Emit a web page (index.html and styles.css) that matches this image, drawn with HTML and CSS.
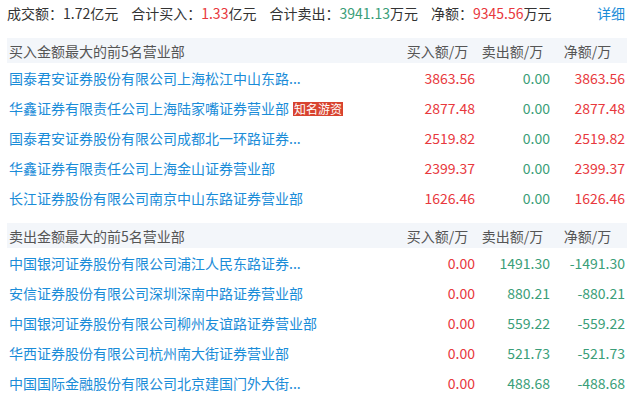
FILE: index.html
```html
<!DOCTYPE html>
<html>
<head>
<meta charset="utf-8">
<link rel="stylesheet" href="styles.css">
</head>
<body>
<div class="page">
  <div class="summary">
    <span class="item">成交额：1.72亿元</span>
    <span class="item">合计买入：<span class="red">1.33</span>亿元</span>
    <span class="item">合计卖出：<span class="green">3941.13</span>万元</span>
    <span class="item">净额：<span class="red">9345.56</span>万元</span>
    <a class="detail">详细</a>
  </div>

  <div class="table first">
    <div class="row head">
      <div class="name">买入金额最大的前5名营业部</div>
      <div class="col">买入额/万</div>
      <div class="col">卖出额/万</div>
      <div class="col">净额/万</div>
    </div>
    <div class="row">
      <div class="name"><a class="link">国泰君安证券股份有限公司上海松江中山东路...</a></div>
      <div class="num red">3863.56</div><div class="num green">0.00</div><div class="num red">3863.56</div>
    </div>
    <div class="row">
      <div class="name"><a class="link">华鑫证券有限责任公司上海陆家嘴证券营业部</a><span class="badge">知名游资</span></div>
      <div class="num red">2877.48</div><div class="num green">0.00</div><div class="num red">2877.48</div>
    </div>
    <div class="row">
      <div class="name"><a class="link">国泰君安证券股份有限公司成都北一环路证券...</a></div>
      <div class="num red">2519.82</div><div class="num green">0.00</div><div class="num red">2519.82</div>
    </div>
    <div class="row">
      <div class="name"><a class="link">华鑫证券有限责任公司上海金山证券营业部</a></div>
      <div class="num red">2399.37</div><div class="num green">0.00</div><div class="num red">2399.37</div>
    </div>
    <div class="row">
      <div class="name"><a class="link">长江证券股份有限公司南京中山东路证券营业部</a></div>
      <div class="num red">1626.46</div><div class="num green">0.00</div><div class="num red">1626.46</div>
    </div>
  </div>

  <div class="table second">
    <div class="row head">
      <div class="name">卖出金额最大的前5名营业部</div>
      <div class="col">买入额/万</div>
      <div class="col">卖出额/万</div>
      <div class="col">净额/万</div>
    </div>
    <div class="row">
      <div class="name"><a class="link">中国银河证券股份有限公司浦江人民东路证券...</a></div>
      <div class="num red">0.00</div><div class="num green">1491.30</div><div class="num green">-1491.30</div>
    </div>
    <div class="row">
      <div class="name"><a class="link">安信证券股份有限公司深圳深南中路证券营业部</a></div>
      <div class="num red">0.00</div><div class="num green">880.21</div><div class="num green">-880.21</div>
    </div>
    <div class="row">
      <div class="name"><a class="link">中国银河证券股份有限公司柳州友谊路证券营业部</a></div>
      <div class="num red">0.00</div><div class="num green">559.22</div><div class="num green">-559.22</div>
    </div>
    <div class="row">
      <div class="name"><a class="link">华西证券股份有限公司杭州南大街证券营业部</a></div>
      <div class="num red">0.00</div><div class="num green">521.73</div><div class="num green">-521.73</div>
    </div>
    <div class="row">
      <div class="name"><a class="link">中国国际金融股份有限公司北京建国门外大街...</a></div>
      <div class="num red">0.00</div><div class="num green">488.68</div><div class="num green">-488.68</div>
    </div>
  </div>
</div>
</body>
</html>
```

FILE: styles.css
```css
html, body {
  margin: 0;
  padding: 0;
  background: #ffffff;
}
body {
  font-family: "Noto Sans CJK SC", "Noto Sans", sans-serif;
  font-size: 14px;
  color: #333333;
}
.page {
  width: 620px;
  margin-left: 7px;
}
.summary {
  display: flex;
  align-items: center;
  height: 26px;
  gap: 13px;
  white-space: nowrap;
}
.summary .detail {
  margin-left: auto;
  margin-right: 2px;
  color: #1a8cd8;
}
.red { color: #e8383d; }
.green { color: #3a9e78; }
.table.first { margin-top: 12px; }
.table.second { margin-top: 10px; }
.row {
  display: grid;
  grid-template-columns: 1fr 75px 75px 75px;
  padding-right: 2px;
  height: 30px;
  align-items: center;
  white-space: nowrap;
}
.row.head {
  height: 25px;
  background: #f3f6fa;
  color: #555555;
}
.name {
  padding-left: 2px;
  display: flex;
  align-items: center;
}
.link {
  color: #1a8cd8;
}
.badge {
  display: inline-flex;
  align-items: center;
  margin-left: 4px;
  margin-top: 1px;
  background: #d8432f;
  color: #ffffff;
  font-size: 12px;
  line-height: 14px;
  height: 14px;
  padding: 0 1px;
}
.col {
  text-align: center;
}
.num {
  text-align: right;
}
```
